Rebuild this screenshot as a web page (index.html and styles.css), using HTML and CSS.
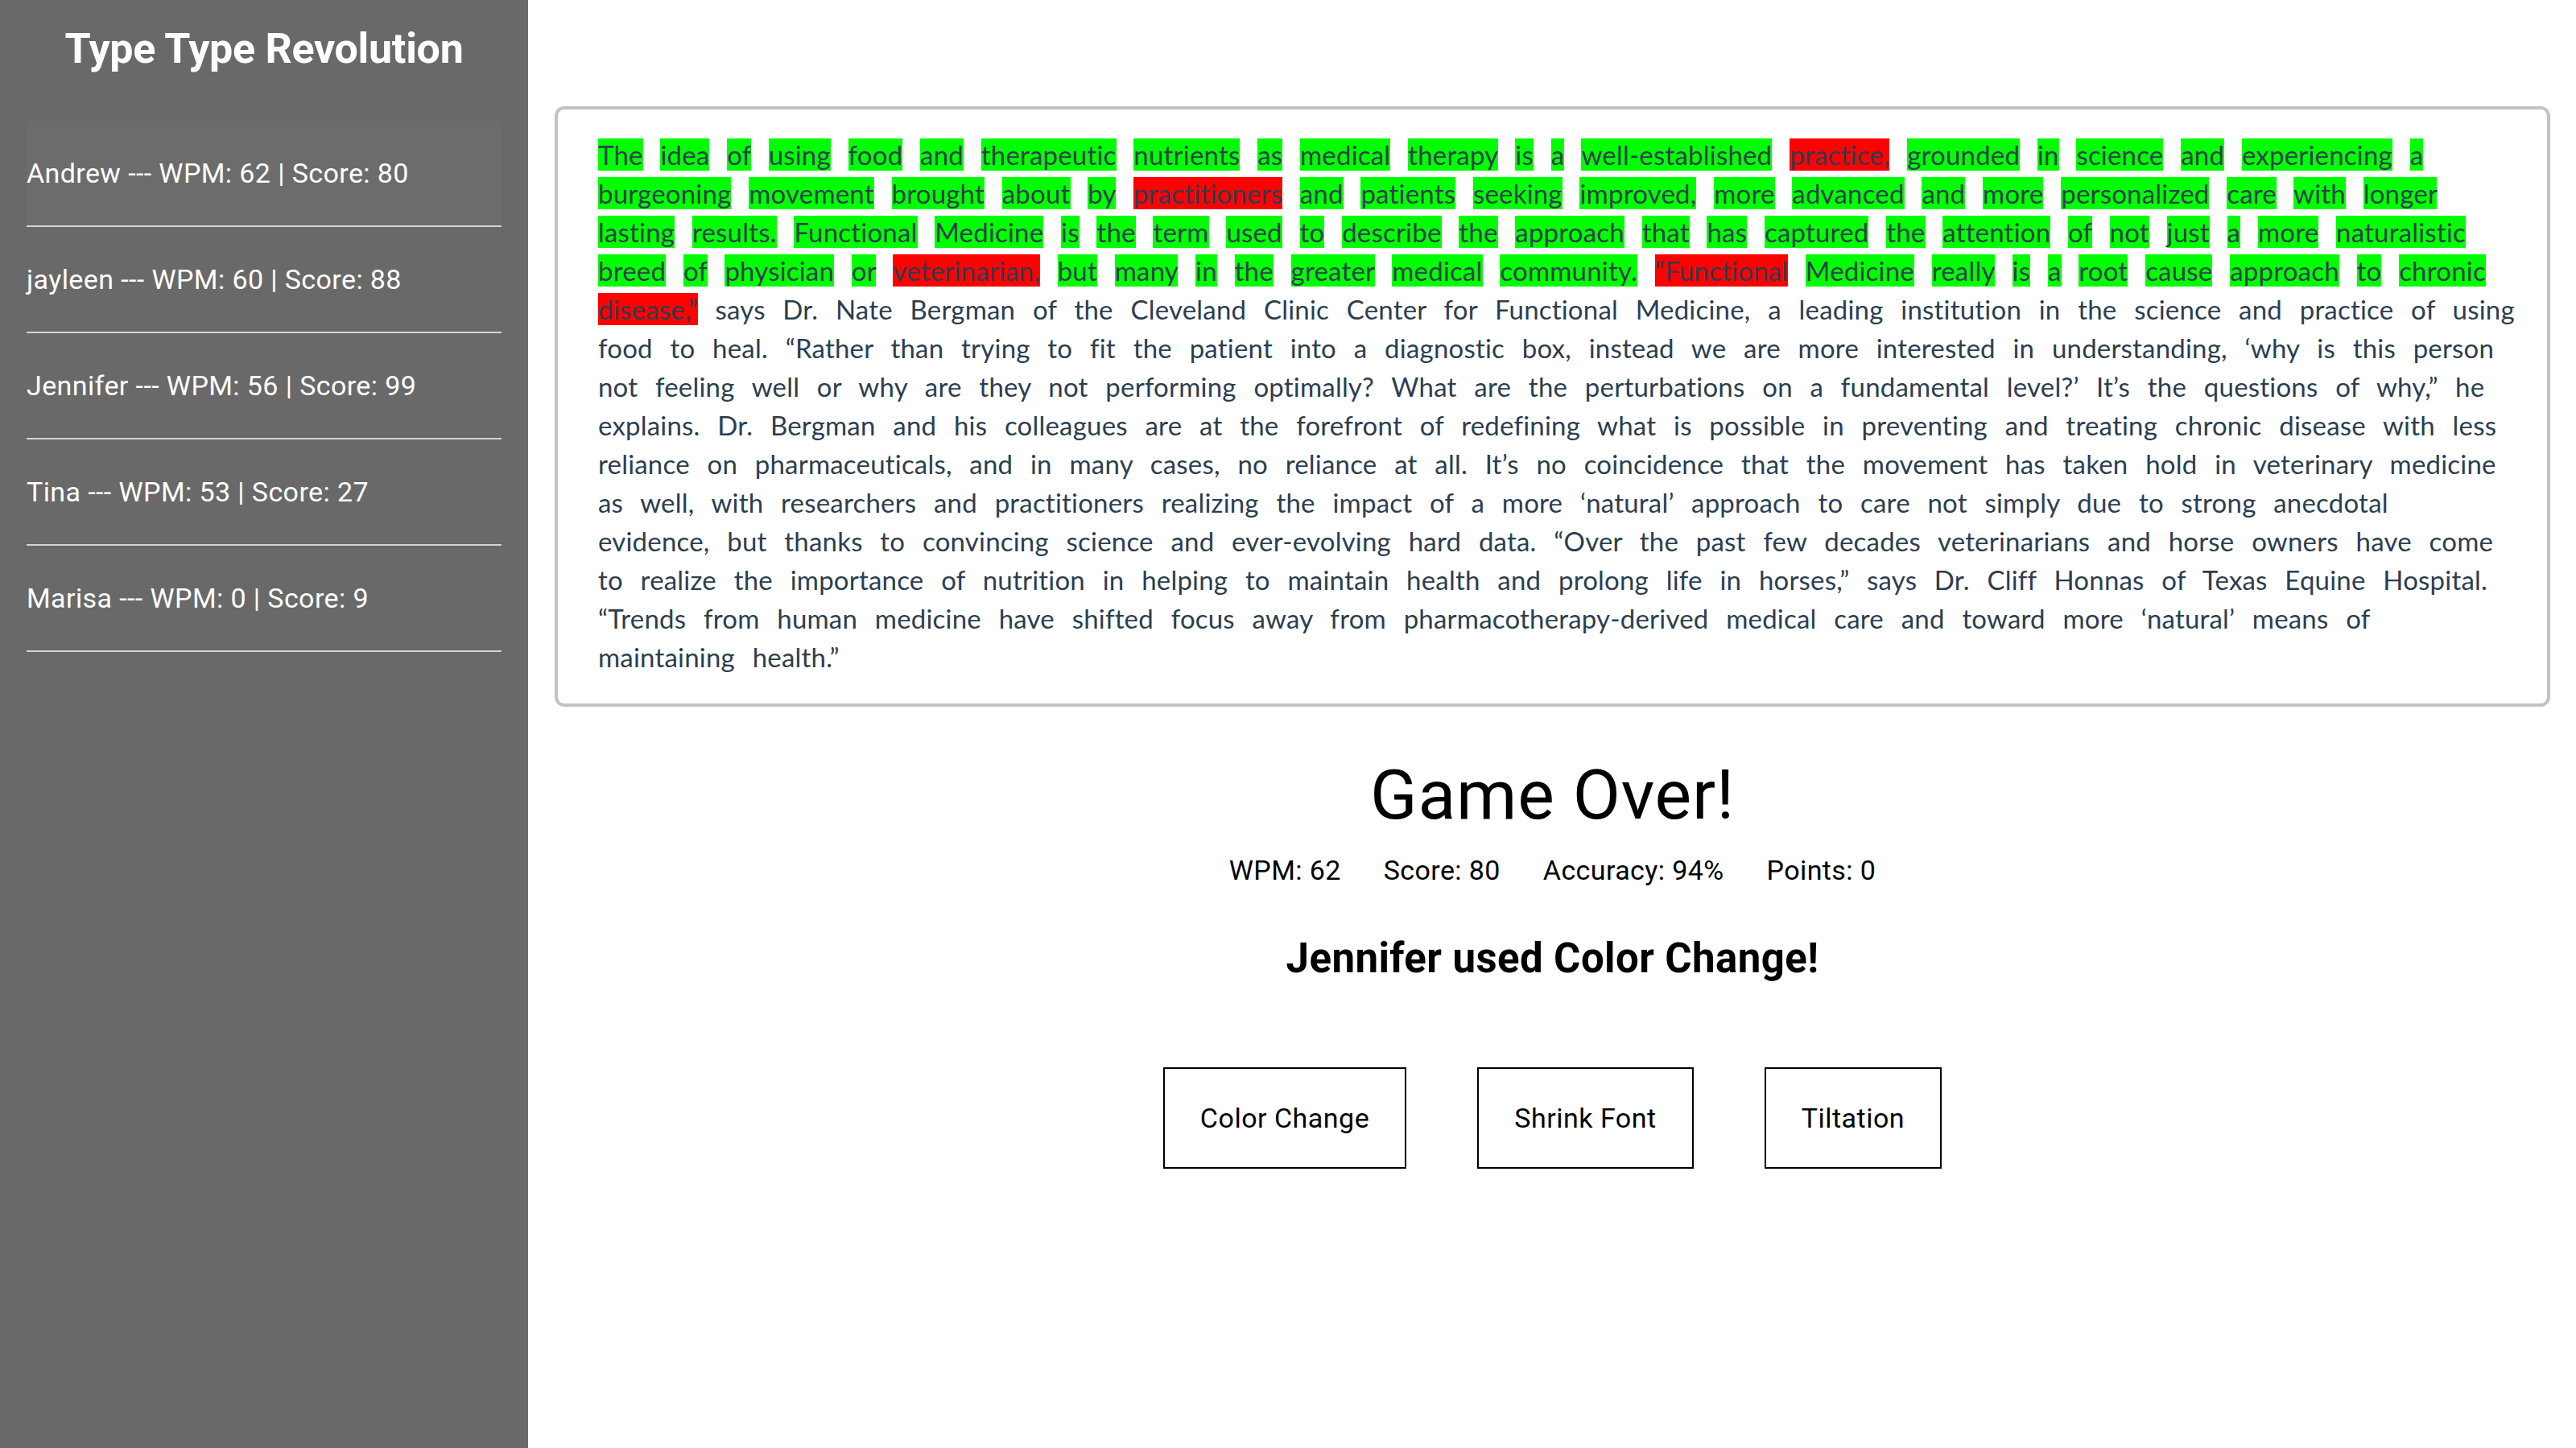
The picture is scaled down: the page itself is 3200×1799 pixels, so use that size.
FILE: index.html
```html
<!DOCTYPE html>
<html lang="en">
<head>
<meta charset="utf-8">
<title>Type Type Revolution</title>
<link rel="stylesheet" href="styles.css">
</head>
<body>
<div class="app">
  <aside class="sidebar">
    <h1 class="brand">Type Type Revolution</h1>
    <ul class="board">
      <li class="player is-current">Andrew --- WPM: 62 | Score: 80</li>
      <li class="player">jayleen --- WPM: 60 | Score: 88</li>
      <li class="player">Jennifer --- WPM: 56 | Score: 99</li>
      <li class="player">Tina --- WPM: 53 | Score: 27</li>
      <li class="player">Marisa --- WPM: 0 | Score: 9</li>
    </ul>
  </aside>
  <main class="main">
    <div class="passage"><span class="ok">The</span> <span class="ok">idea</span> <span class="ok">of</span> <span class="ok">using</span> <span class="ok">food</span> <span class="ok">and</span> <span class="ok">therapeutic</span> <span class="ok">nutrients</span> <span class="ok">as</span> <span class="ok">medical</span> <span class="ok">therapy</span> <span class="ok">is</span> <span class="ok">a</span> <span class="ok">well-established</span> <span class="bad">practice,</span> <span class="ok">grounded</span> <span class="ok">in</span> <span class="ok">science</span> <span class="ok">and</span> <span class="ok">experiencing</span> <span class="ok">a</span> <span class="ok">burgeoning</span> <span class="ok">movement</span> <span class="ok">brought</span> <span class="ok">about</span> <span class="ok">by</span> <span class="bad">practitioners</span> <span class="ok">and</span> <span class="ok">patients</span> <span class="ok">seeking</span> <span class="ok">improved,</span> <span class="ok">more</span> <span class="ok">advanced</span> <span class="ok">and</span> <span class="ok">more</span> <span class="ok">personalized</span> <span class="ok">care</span> <span class="ok">with</span> <span class="ok">longer</span> <span class="ok">lasting</span> <span class="ok">results.</span> <span class="ok">Functional</span> <span class="ok">Medicine</span> <span class="ok">is</span> <span class="ok">the</span> <span class="ok">term</span> <span class="ok">used</span> <span class="ok">to</span> <span class="ok">describe</span> <span class="ok">the</span> <span class="ok">approach</span> <span class="ok">that</span> <span class="ok">has</span> <span class="ok">captured</span> <span class="ok">the</span> <span class="ok">attention</span> <span class="ok">of</span> <span class="ok">not</span> <span class="ok">just</span> <span class="ok">a</span> <span class="ok">more</span> <span class="ok">naturalistic</span> <span class="ok">breed</span> <span class="ok">of</span> <span class="ok">physician</span> <span class="ok">or</span> <span class="bad">veterinarian,</span> <span class="ok">but</span> <span class="ok">many</span> <span class="ok">in</span> <span class="ok">the</span> <span class="ok">greater</span> <span class="ok">medical</span> <span class="ok">community.</span> <span class="bad">“Functional</span> <span class="ok">Medicine</span> <span class="ok">really</span> <span class="ok">is</span> <span class="ok">a</span> <span class="ok">root</span> <span class="ok">cause</span> <span class="ok">approach</span> <span class="ok">to</span> <span class="ok">chronic</span> <span class="bad">disease,”</span> says Dr. Nate Bergman of the Cleveland Clinic Center for Functional Medicine, a leading institution in the science and practice of using food to heal. “Rather than trying to fit the patient into a diagnostic box, instead we are more interested in understanding, ‘why is this person not feeling well or why are they not performing optimally? What are the perturbations on a fundamental level?’ It’s the questions of why,” he explains. Dr. Bergman and his colleagues are at the forefront of redefining what is possible in preventing and treating chronic disease with less reliance on pharmaceuticals, and in many cases, no reliance at all. It’s no coincidence that the movement has taken hold in veterinary medicine as well, with researchers and practitioners realizing the impact of a more ‘natural’ approach to care not simply due to strong anecdotal<br>evidence, but thanks to convincing science and ever-evolving hard data. “Over the past few decades veterinarians and horse owners have come to realize the importance of nutrition in helping to maintain health and prolong life in horses,” says Dr. Cliff Honnas of Texas Equine Hospital.<br>“Trends from human medicine have shifted focus away from pharmacotherapy-derived medical care and toward more ‘natural’ means of<br>maintaining health.”</div>
    <section class="results">
      <h2 class="game-over">Game Over!</h2>
      <div class="stats">
        <span class="stat">WPM: 62</span>
        <span class="stat">Score: 80</span>
        <span class="stat">Accuracy: 94%</span>
        <span class="stat">Points: 0</span>
      </div>
      <h3 class="announce">Jennifer used Color Change!</h3>
      <div class="powerups">
        <button class="power" type="button">Color Change</button>
        <button class="power" type="button">Shrink Font</button>
        <button class="power" type="button">Tiltation</button>
      </div>
    </section>
  </main>
</div>
</body>
</html>
```
FILE: styles.css
```css
* { box-sizing: border-box; }

html, body {
  margin: 0;
  padding: 0;
  background: #ffffff;
}

body {
  font-family: Roboto, "Liberation Sans", sans-serif;
  color: #000;
}

.app {
  display: flex;
  min-height: 1799px;
}

.sidebar {
  width: 656px;
  flex: 0 0 656px;
  background: #696969;
  color: #ffffff;
  padding: 30px 33px 0;
}

.brand {
  margin: 0;
  font-size: 52px;
  font-weight: 700;
  line-height: 61px;
  text-align: center;
  letter-spacing: -0.3px;
}

.board {
  list-style: none;
  margin: 59px 0 0;
  padding: 0;
}

.player {
  font-size: 34px;
  letter-spacing: 0.4px;
  line-height: 38px;
  padding: 46px 0;
  border-bottom: 2px solid #d4d4d4;
}

.player.is-current {
  background: #6c6c6c;
}

.main {
  flex: 1;
  padding: 132px 32px 0 33px;
  display: flex;
  flex-direction: column;
}

.passage {
  border: 4px solid #bfc4c8;
  border-radius: 12px;
  padding: 32px 30px 34px 50px;
  font-family: Lato, "Open Sans", sans-serif;
  font-size: 33px;
  letter-spacing: 0.2px;
  line-height: 48px;
  color: #2c3e50;
  word-spacing: 13.1px;
}

.ok { background: #00ff00; }
.bad { background: #ff0000; }

.results {
  display: flex;
  flex-direction: column;
  align-items: center;
}

.game-over {
  margin: 59px 0 0;
  font-size: 86px;
  font-weight: 400;
  letter-spacing: 0.8px;
  line-height: 101px;
}

.stats {
  margin-top: 23px;
  display: flex;
  gap: 53px;
  font-size: 34px;
  letter-spacing: 0.4px;
  line-height: 40px;
}

.announce {
  margin: 60px 0 0;
  font-size: 51px;
  font-weight: 700;
  letter-spacing: 0.4px;
  line-height: 60px;
}

.powerups {
  margin-top: 105px;
  display: flex;
  gap: 88px;
}

.power {
  font-family: Roboto, "Liberation Sans", sans-serif;
  font-size: 34px;
  letter-spacing: 0.5px;
  line-height: 38px;
  padding: 42px 44px;
  border: 2px solid #000;
  background: #fff;
  color: #000;
  cursor: pointer;
}
```
